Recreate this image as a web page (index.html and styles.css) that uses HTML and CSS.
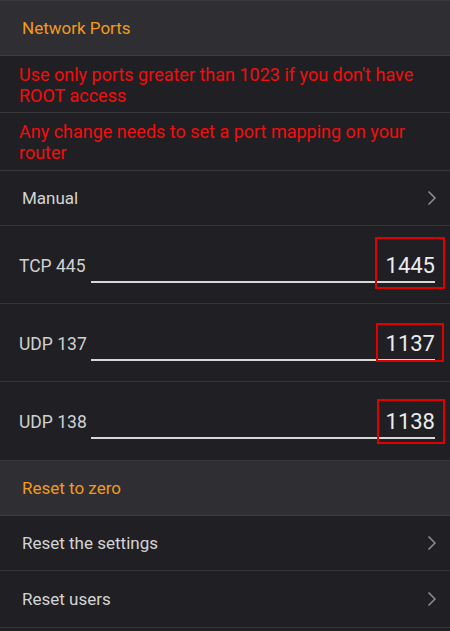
FILE: index.html
```html
<!DOCTYPE html>
<html>
<head>
  <title>Network Ports</title>
  <link rel="stylesheet" href="styles.css">
</head>
<body>
  <div class="screen">
    <div class="section-head">Network Ports</div>
    <div class="warn">Use only ports greater than 1023 if you don't have ROOT access</div>
    <div class="warn warn-tall">Any change needs to set a port mapping on your router</div>

    <div class="item">
      <span>Manual</span>
      <svg class="chevron" width="10" height="16" viewBox="0 0 10 16"><path d="M1.5 1.5 L8 8 L1.5 14.5" /></svg>
    </div>

    <div class="port">
      <span class="port-label">TCP 445</span>
      <div class="port-input">
        <span class="port-value">1445</span>
        <span class="mark mark-tcp"></span>
      </div>
    </div>
    <div class="port">
      <span class="port-label">UDP 137</span>
      <div class="port-input">
        <span class="port-value">1137</span>
        <span class="mark mark-137"></span>
      </div>
    </div>
    <div class="port port-last">
      <span class="port-label">UDP 138</span>
      <div class="port-input">
        <span class="port-value">1138</span>
        <span class="mark mark-138"></span>
      </div>
    </div>

    <div class="section-head">Reset to zero</div>
    <div class="item">
      <span>Reset the settings</span>
      <svg class="chevron" width="10" height="16" viewBox="0 0 10 16"><path d="M1.5 1.5 L8 8 L1.5 14.5" /></svg>
    </div>
    <div class="item item-last">
      <span>Reset users</span>
      <svg class="chevron" width="10" height="16" viewBox="0 0 10 16"><path d="M1.5 1.5 L8 8 L1.5 14.5" /></svg>
    </div>
  </div>
</body>
</html>
```

FILE: styles.css
```css
/* Network ports settings */
body {
  margin: 0;
  background-color: #202024;
  font-family: Roboto, "Noto Sans", sans-serif;
}

.screen {
  width: 450px;
  height: 631px;
  overflow: hidden;
  border-top: 1px solid #3a3a3e;
  box-sizing: border-box;
}

.section-head {
  height: 55px;
  box-sizing: border-box;
  display: flex;
  align-items: center;
  padding-left: 22px;
  background-color: #2f2f33;
  color: #f39a1c;
  font-size: 17px;
  border-bottom: 1px solid #3c3f45;
}

.warn {
  height: 57px;
  box-sizing: border-box;
  padding: 8px 20px 0 19px;
  color: #f40d0d;
  font-size: 18px;
  line-height: 21px;
  border-bottom: 1px solid #38383c;
}

.warn-tall {
  height: 58px;
}

.item {
  height: 55px;
  box-sizing: border-box;
  display: flex;
  align-items: center;
  justify-content: space-between;
  padding: 0 13px 0 22px;
  color: #d4d4d4;
  font-size: 17px;
  border-bottom: 1px solid #36363a;
}

.item-last {
  height: 57px;
}

.chevron path {
  fill: none;
  stroke: #8e8e92;
  stroke-width: 1.5;
}

.port {
  height: 78px;
  box-sizing: border-box;
  display: flex;
  align-items: center;
  padding: 2px 15px 0 19px;
  border-bottom: 1px solid #36363a;
}

.port-last {
  height: 79px;
}

.port-label {
  width: 72px;
  color: #d0d0d0;
  font-size: 17.5px;
}

.port-input {
  position: relative;
  flex: 1;
  text-align: right;
  border-bottom: 2px solid #d8d8d8;
  margin-top: 2px;
}

.port-value {
  display: block;
  color: #ececec;
  font-size: 22px;
  line-height: 30px;
}

.mark {
  position: absolute;
  border: 2px solid #e00000;
}

.mark-tcp {
  top: -14px;
  right: -10px;
  width: 66px;
  height: 48px;
}

.mark-137 {
  top: -6px;
  right: -9px;
  width: 64px;
  height: 35px;
}

.mark-138 {
  top: -8px;
  right: -10px;
  width: 64px;
  height: 41px;
}
```
